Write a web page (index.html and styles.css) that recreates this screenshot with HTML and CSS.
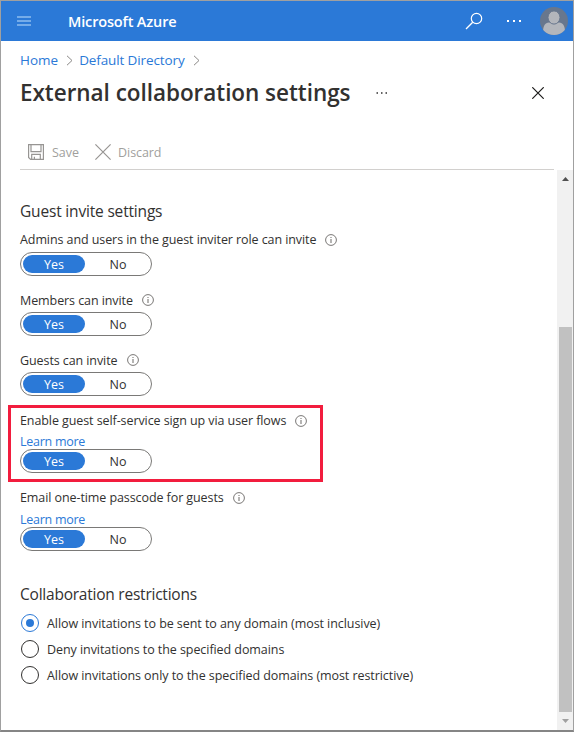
FILE: index.html
```html
<!DOCTYPE html>
<html lang="en">
<head>
<meta charset="utf-8">
<title>External collaboration settings - Microsoft Azure</title>
<link rel="stylesheet" href="styles.css">
</head>
<body>
<svg class="defs" width="0" height="0">
  <symbol id="info" viewBox="0 0 12 12"><circle cx="6" cy="6" r="5.4" fill="none" stroke="currentColor"/><path d="M6 5v4M6 3v1" stroke="currentColor" stroke-width="1.1"/></symbol>
  <symbol id="chevron" viewBox="0 0 7 11"><path d="M1 .8l5 4.7-5 4.7" fill="none" stroke="currentColor"/></symbol>
</svg>
<div class="window">
  <header class="topbar">
    <svg class="menu" width="14" height="10" viewBox="0 0 14 10"><path d="M0 1h14M0 5h14M0 9h14" stroke="currentColor" stroke-width="1.6"/></svg>
    <span class="brand">Microsoft Azure</span>
    <svg class="search" width="18" height="18" viewBox="0 0 18 18"><circle cx="11.5" cy="6.5" r="5.2" fill="none" stroke="currentColor" stroke-width="1.2"/><path d="M7.7 10.3L1 17" stroke="currentColor" stroke-width="1.3"/></svg>
    <svg class="more" width="16" height="2" viewBox="0 0 16 2"><path d="M1 0h2v2H1zM7 0h2v2H7zM13 0h2v2h-2z" fill="currentColor"/></svg>
    <svg class="avatar" width="28" height="28" viewBox="0 0 28 28"><defs><clipPath id="face"><circle cx="14" cy="14" r="14"/></clipPath></defs><g clip-path="url(#face)"><path d="M0 0h28v28H0z" fill="#68778d"/><path d="M3 25c0-6 2-9 6-9.400q5 2 10 0c4 .4 6 3.400 6 9.400v3H3z" fill="#b3b6bc"/><ellipse cx="14" cy="10.500" rx="6" ry="6.600" fill="#b3b6bc" stroke="#68778d"/></g></svg>
  </header>
  <nav class="crumbs">
    <a class="home">Home</a><svg width="7" height="11"><use href="#chevron"/></svg><a class="dir">Default Directory</a><svg width="7" height="11"><use href="#chevron"/></svg>
  </nav>
  <div class="titlebar">
    <h1>External collaboration settings</h1>
    <svg class="title-more" width="12" height="2" viewBox="0 0 12 2"><path d="M.5 .2H2v1.500H.5zM5 .2h1.500v1.500H5zM9.500 .2H11v1.500H9.500z" fill="currentColor"/></svg>
    <svg class="close" width="12" height="12" viewBox="0 0 12 12"><path d="M.3 .3l11.400 11.400M11.700 .3L.3 11.700" stroke="currentColor" stroke-width="1.200"/></svg>
  </div>
  <div class="toolbar">
    <svg width="16" height="16" viewBox="0 0 16 16" fill="none" stroke="currentColor" stroke-width="1.200"><path d="M.6 .6h14.800v14.800H2.600l-2-2zM3 .6v7h10v-7M3.700 15.400v-5h8.600v5M6.400 15.400v-2.600"/></svg>
    <span class="save">Save</span>
    <svg width="16" height="16" viewBox="0 0 16 16"><path d="M.4 .4l15.200 15.200M15.600 .4L.4 15.600" stroke="currentColor" stroke-width="1.200"/></svg>
    <span class="discard">Discard</span>
  </div>
  <div class="body">
    <main>
      <h2>Guest invite settings</h2>
      <section class="setting"><div class="label"><span>Admins and users in the guest inviter role can invite</span><svg><use href="#info"/></svg></div><div class="toggle"><span class="on">Yes</span><span>No</span></div></section>
      <section class="setting short"><div class="label"><span>Members can invite</span><svg><use href="#info"/></svg></div><div class="toggle"><span class="on">Yes</span><span>No</span></div></section>
      <section class="setting short"><div class="label"><span>Guests can invite</span><svg><use href="#info"/></svg></div><div class="toggle"><span class="on">Yes</span><span>No</span></div></section>
      <section class="setting linked highlight"><div class="label"><span>Enable guest self-service sign up via user flows</span><svg><use href="#info"/></svg></div><a class="learn">Learn more</a><div class="toggle"><span class="on">Yes</span><span>No</span></div></section>
      <section class="setting linked passcode"><div class="label"><span>Email one-time passcode for guests</span><svg><use href="#info"/></svg></div><a class="learn">Learn more</a><div class="toggle"><span class="on">Yes</span><span>No</span></div></section>
      <h2 class="restrictions">Collaboration restrictions</h2>
      <div class="option selected"><i></i><span>Allow invitations to be sent to any domain (most inclusive)</span></div>
      <div class="option"><i></i><span>Deny invitations to the specified domains</span></div>
      <div class="option"><i></i><span>Allow invitations only to the specified domains (most restrictive)</span></div>
    </main>
    <div class="scrollbar">
      <svg width="7" height="4" viewBox="0 0 7 4"><path d="M0 4L3.500 0 7 4z" fill="#505050"/></svg>
      <div class="thumb"></div>
      <svg width="7" height="4" viewBox="0 0 7 4"><path d="M0 0h7L3.500 4z" fill="#a0a0a0"/></svg>
    </div>
  </div>
</div>
</body>
</html>
```

FILE: styles.css
```css
* { box-sizing: border-box; }
body { margin: 0; background: #fff; color: #323130; font: 12.5px/20px "Open Sans", "Noto Sans", sans-serif; white-space: nowrap; overflow: hidden; }
h1, h2 { margin: 0; }
svg { flex: none; display: block; }
.defs { position: absolute; }
.window { width: 574px; height: 732px; border: 1px solid #a0a0a0; border-bottom: 2px solid #858585; display: flex; flex-direction: column; }
.topbar { height: 40px; background: #2b79d7; color: #fff; display: flex; align-items: center; padding: 0 5px 0 16px; }
.menu { color: #8fbdf0; }
.brand { margin-left: 37px; padding-top: 1px; font-size: 14.5px; font-weight: 600; letter-spacing: -.15px; }
.search { margin-left: auto; }
.more { margin-left: 23px; }
.avatar { margin-left: 18px; }
.crumbs { height: 38px; padding-left: 19px; display: flex; align-items: center; color: #2b79d7; font-size: 13.5px; }
.crumbs svg { color: #8a8886; }
.crumbs a + svg { margin-left: 8px; }
.crumbs svg + a { margin-left: 6px; }
.dir { letter-spacing: -.12px; }
.titlebar { height: 28px; padding: 0 29px 0 19px; display: flex; align-items: center; }
h1 { font-size: 22.5px; line-height: 28px; font-weight: 600; letter-spacing: -.04px; }
.title-more { margin-left: 25px; }
.close { margin-left: auto; color: #1b1a19; }
.toolbar { margin: 26px 19px 0; height: 37px; padding: 1px 0 0 8px; border-bottom: 1px solid #d2d0ce; display: flex; align-items: center; color: #a19f9d; }
.toolbar svg { color: #979593; }
.toolbar span { padding-top: 3px; }
.save { margin-left: 8px; margin-right: 16px; }
.discard { margin-left: 7px; letter-spacing: -.08px; }
.body { flex: 1; display: flex; min-height: 0; }
main { flex: 1; padding: 30px 0 0 19px; }
h2 { height: 22px; font-size: 15.5px; line-height: 22px; font-weight: 400; letter-spacing: -.18px; }
.setting { margin-top: 14px; }
h2 + .setting { margin-top: 8px; }
.label { height: 20px; display: flex; align-items: center; letter-spacing: -.085px; }
.short .label span { padding-top: 2px; }
.label svg { width: 12px; height: 12px; margin-left: 9px; color: #797775; }
.toggle { width: 132px; height: 24px; margin-top: 2px; border: 1px solid #7a7977; border-radius: 12px; display: flex; padding: 2px; line-height: 20px; text-align: center; }
.toggle span { width: 62px; height: 18px; border-radius: 9px; }
.toggle span + span { margin-left: 2px; }
.toggle .on { background: #2b79d7; color: #fff; }
.linked .toggle { margin-top: 0; }
.learn { display: block; height: 18px; line-height: 22px; letter-spacing: -.27px; color: #2b79d7; }
.highlight { width: 315px; height: 77px; margin: 9px 0 0 -12px; padding: 3px 0 0 9px; border: 3px solid #f21d3e; }
.highlight + .setting { margin-top: 6px; }
.passcode .learn { height: 19px; line-height: 24px; }
h2.restrictions { margin-top: 32px; margin-bottom: 5px; letter-spacing: -.23px; }
.option { height: 26px; display: flex; align-items: center; gap: 8px; padding-left: 1px; letter-spacing: -.065px; }
.option span { padding-top: 1px; }
.option i { width: 18px; height: 18px; border: 1px solid #323130; border-radius: 50%; display: grid; place-items: center; }
.selected i { border-color: #2b79d7; }
.selected i::after { content: ""; width: 8px; height: 8px; border-radius: 50%; background: #2b79d7; }
.scrollbar { width: 16px; background: #f1f1f1; display: flex; flex-direction: column; align-items: center; padding: 7px 0; }
.thumb { width: 13px; height: 385px; margin: auto 0 7px; background: #c1c1c1; }
```
